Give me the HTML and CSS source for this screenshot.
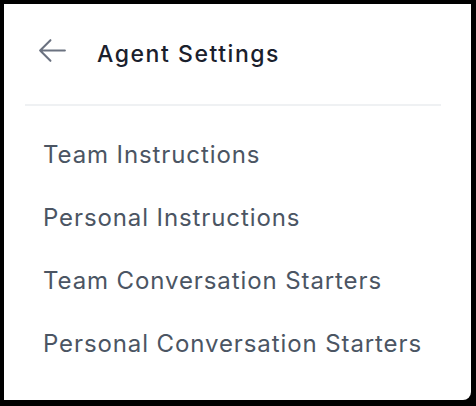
FILE: index.html
```html
<!DOCTYPE html>
<html lang="en">
<head>
<meta charset="utf-8">
<title>Agent Settings</title>
<link rel="stylesheet" href="styles.css">
</head>
<body>
<div class="panel">
  <header class="header">
    <button class="back" aria-label="Back">
      <svg width="33" height="33" viewBox="0 0 24 24" fill="none" stroke="currentColor" stroke-width="1.5" stroke-linecap="round" stroke-linejoin="round"><path d="M10.5 19.5 3 12m0 0 7.5-7.5M3 12h18"/></svg>
    </button>
    <h1 class="title">Agent Settings</h1>
  </header>
  <nav class="menu">
    <a class="item">Team Instructions</a>
    <a class="item">Personal Instructions</a>
    <a class="item">Team Conversation Starters</a>
    <a class="item">Personal Conversation Starters</a>
  </nav>
</div>
</body>
</html>
```
FILE: styles.css
```css
* { box-sizing: border-box; }
html, body { margin: 0; padding: 0; }
body {
  background: #000;
  width: 476px;
  height: 406px;
  padding: 4px 5px 6px 4px;
  font-family: Inter, "Noto Sans", sans-serif;
}
.panel {
  background: #fff;
  height: 100%;
  border-bottom-right-radius: 8px;
  padding: 30px 30px 0 21px;
}
.header {
  display: flex;
  align-items: flex-start;
  gap: 28px;
  padding: 0 0 0 11px;
  height: 72px;
  border-bottom: 2px solid #eff1f3;
}
.back {
  border: 0;
  background: none;
  padding: 0;
  color: #6b7280;
  display: flex;
  width: 33px;
  height: 33px;
}
.title {
  margin: 6px 0 0;
  font-size: 23px;
  line-height: 28px;
  font-weight: 550;
  letter-spacing: 1.55px;
  color: #1a202c;
}
.menu {
  display: flex;
  flex-direction: column;
  padding: 17px 0 0 18px;
}
.item {
  font-size: 24px;
  line-height: 32px;
  padding: 15.5px 0;
  letter-spacing: 0.9px;
  color: #4b5563;
}
```
